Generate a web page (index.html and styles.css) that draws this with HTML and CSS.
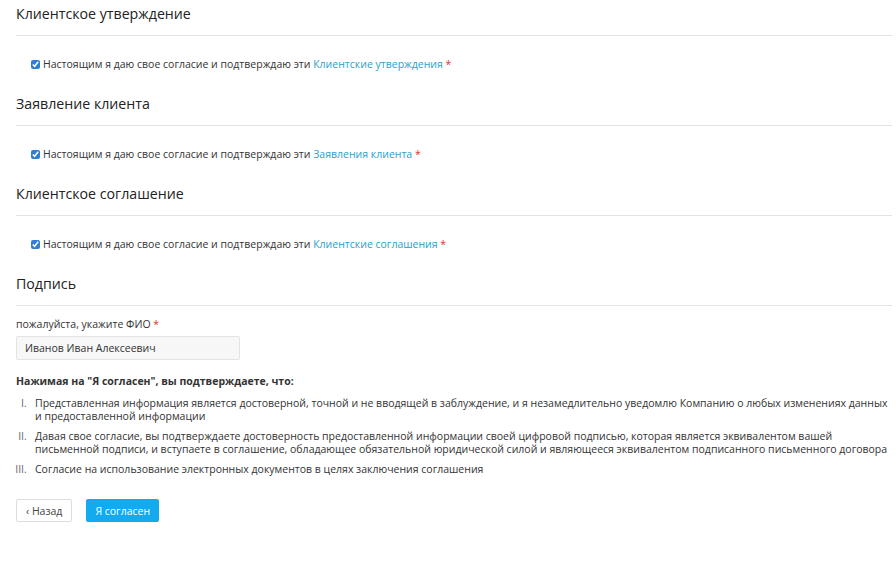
FILE: index.html
```html
<!DOCTYPE html>
<html lang="ru">
<head>
    <meta charset="UTF-8">
    <meta name="viewport" content="width=device-width, initial-scale=1.0">
    <title>Подтверждение</title>
    <link rel="stylesheet" href="styles.css">
</head>
<body>
    <div class="page">
        <div class="section">
            <h3 class="section-title">Клиентское утверждение</h3>
            <label class="agree">
                <input type="checkbox" checked>
                <span>Настоящим я даю свое согласие и подтверждаю эти <a href="#">Клиентские утверждения</a> <span class="req">*</span></span>
            </label>
        </div>
        <div class="section">
            <h3 class="section-title">Заявление клиента</h3>
            <label class="agree">
                <input type="checkbox" checked>
                <span>Настоящим я даю свое согласие и подтверждаю эти <a href="#">Заявления клиента</a> <span class="req">*</span></span>
            </label>
        </div>
        <div class="section">
            <h3 class="section-title">Клиентское соглашение</h3>
            <label class="agree">
                <input type="checkbox" checked>
                <span>Настоящим я даю свое согласие и подтверждаю эти <a href="#">Клиентские соглашения</a> <span class="req">*</span></span>
            </label>
        </div>
        <div class="section">
            <h3 class="section-title">Подпись</h3>
            <label class="field-label" for="fio">пожалуйста, укажите ФИО <span class="req">*</span></label>
            <input type="text" id="fio" class="field" value="Иванов Иван Алексеевич">
            <p class="terms-title">Нажимая на "Я согласен", вы подтверждаете, что:</p>
            <ol class="terms">
                <li>Представленная информация является достоверной, точной и не вводящей в заблуждение, и я незамедлительно уведомлю Компанию о любых изменениях данных и предоставленной информации</li>
                <li>Давая свое согласие, вы подтверждаете достоверность предоставленной информации своей цифровой подписью, которая является эквивалентом вашей письменной подписи, и вступаете в соглашение, обладающее обязательной юридической силой и являющееся эквивалентом подписанного письменного договора</li>
                <li>Согласие на использование электронных документов в целях заключения соглашения</li>
            </ol>
            <div class="actions">
                <button class="btn btn-back">&lsaquo; Назад</button>
                <button class="btn btn-primary">Я согласен</button>
            </div>
        </div>
    </div>
</body>
</html>
```

FILE: styles.css
```css
body {
    margin: 0;
    padding: 0;
    background: #fff;
    font-family: 'Open Sans', 'Liberation Sans', sans-serif;
    font-size: 10.5px;
    color: #333;
}
.page {
    padding: 4px 4px 0 16px;
}
.section {
    margin-bottom: 22px;
}
.section-title {
    margin: 0;
    font-size: 14.2px;
    font-weight: normal;
    line-height: 20px;
    color: #222;
    padding-bottom: 11px;
    border-bottom: 1px solid #e3e3e3;
}
.agree {
    display: flex;
    align-items: center;
    margin-top: 20px;
    padding-left: 15px;
    line-height: 16px;
}
.agree input {
    width: 9px;
    height: 9px;
    margin: 0 3px 0 0;
    accent-color: #2f7fd8;
}
a {
    color: #2a9fd0;
    text-decoration: none;
}
.req {
    color: #e0322e;
}
.field-label {
    display: block;
    margin-top: 10px;
    line-height: 16px;
}
.field {
    display: block;
    box-sizing: border-box;
    width: 224px;
    height: 24px;
    margin-top: 4px;
    padding: 0 8px;
    border: 1px solid #e3e3e3;
    border-radius: 2px;
    background: #f7f7f7;
    font-family: inherit;
    font-size: 10.5px;
    color: #333;
}
.terms-title {
    margin: 13px 0 0;
    font-weight: bold;
    line-height: 16px;
}
.terms {
    margin: 8px 0 0;
    padding-left: 19px;
}
.terms li {
    line-height: 13px;
    margin-bottom: 7px;
}
.terms li::marker {
    content: counter(list-item, upper-roman) ".\00a0\00a0\00a0";
    color: #666;
}
.actions {
    display: flex;
    gap: 14px;
    margin-top: 23px;
}
.btn {
    height: 23px;
    padding: 0 8px;
    border-radius: 2px;
    font-family: inherit;
    font-size: 10.5px;
    cursor: pointer;
}
.btn-back {
    padding: 0 9px;
    background: #fff;
    border: 1px solid #ddd;
    color: #444;
}
.btn-primary {
    background: #14aaf0;
    border: 1px solid #14aaf0;
    color: #fff;
}
```
